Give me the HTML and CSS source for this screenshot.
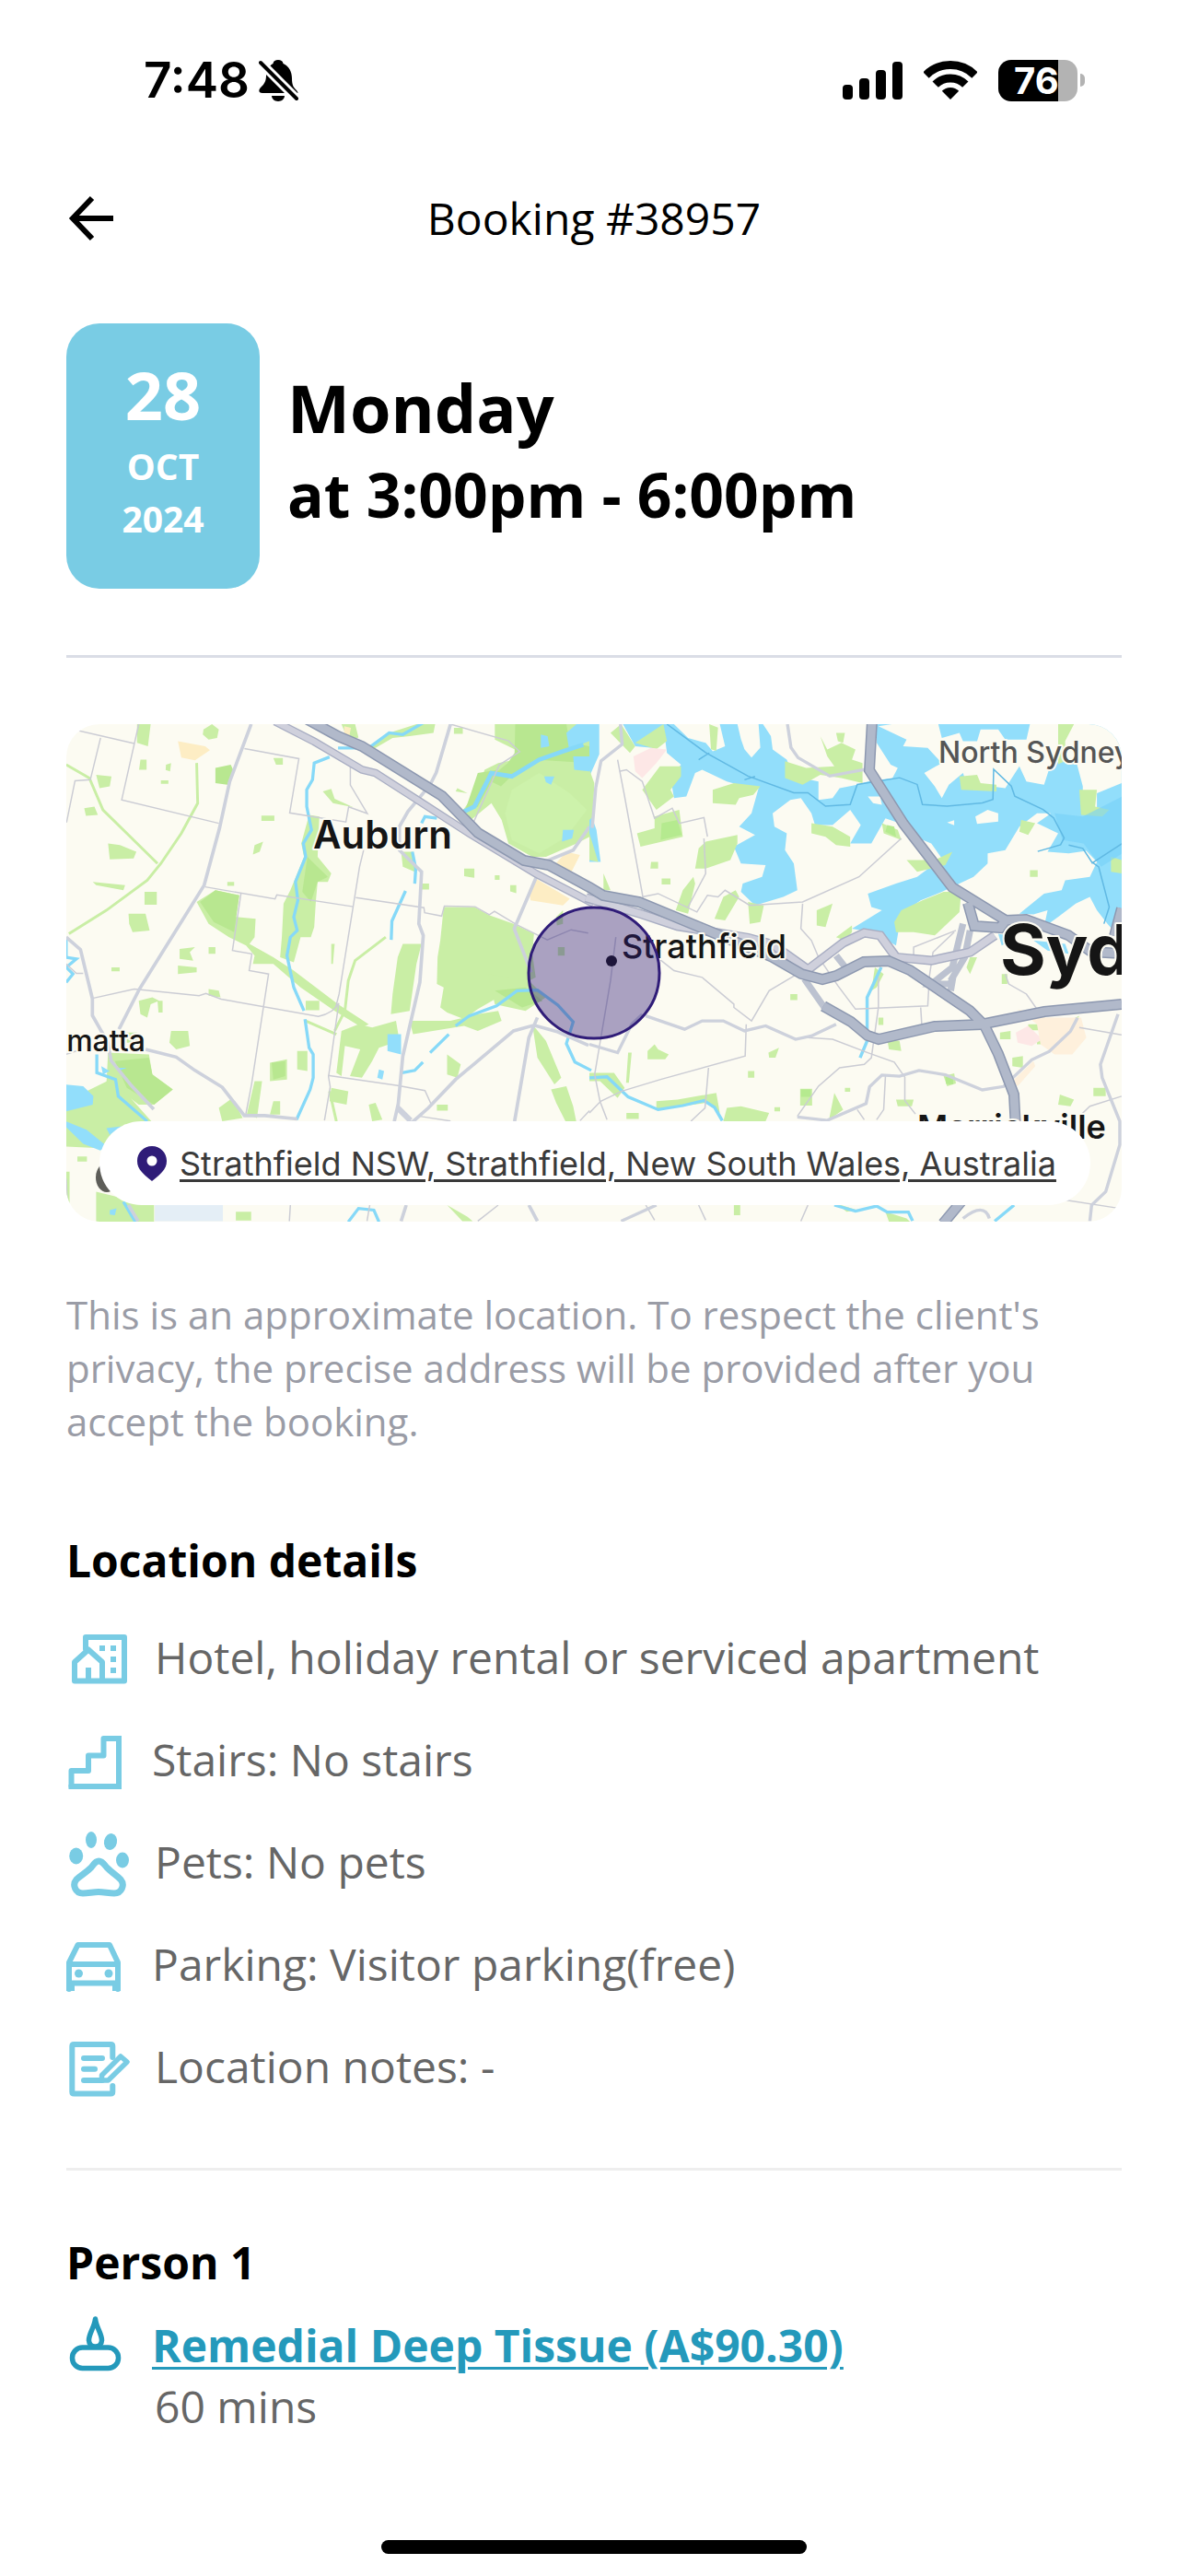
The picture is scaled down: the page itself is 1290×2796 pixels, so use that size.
FILE: index.html
```html
<!DOCTYPE html>
<html lang="en">
<head>
    <meta charset="UTF-8">
    <meta name="viewport" content="width=device-width, initial-scale=1.0">
    <title>Booking #38957</title>
    <link rel="stylesheet" href="styles.css">
</head>
<body>

    <!-- Status bar -->
    <div class="status-bar">
        <div class="status-left">
            <span class="time">7:48</span>
            <svg class="bell" viewBox="0 0 44 46">
                <path d="M21 1c3 0 5 1 5.500 4C33 8 36 14 36 21c0 8 2 10 5 13 3 4 1 3-2 3H4c-5 0-4-4-2-6 4-4 6-7 6-13C8 14 10 8 15.500 5 16 2 18 1 21 1z"/>
                <path d="M14 40h14c0 3-3 6-7 6s-7-3-7-6z"/>
                <path d="M1 3l40 40" stroke="#fff" stroke-width="10"/>
                <path d="M2 4l39 39" stroke="#000" stroke-width="4" stroke-linecap="round"/>
            </svg>
        </div>
        <div class="status-right">
            <svg class="signal" viewBox="0 0 65 41">
                <rect x="0" y="25" width="11" height="16" rx="4"/>
                <rect x="18" y="18" width="11" height="23" rx="4"/>
                <rect x="36" y="9" width="11" height="32" rx="4"/>
                <rect x="54" y="0" width="11" height="41" rx="4"/>
            </svg>
            <svg class="wifi" viewBox="0 0 58 42">
                <path d="M2.500 15.500a37.500 37.500 0 0 1 53 0" fill="none" stroke="#000" stroke-width="9"/>
                <path d="M12.700 25.700a23 23 0 0 1 32.600 0" fill="none" stroke="#000" stroke-width="9"/>
                <path d="M29 42l-9.200-9.200a13 13 0 0 1 18.400 0z"/>
            </svg>
            <div class="battery">
                <span class="battery-level">76</span>
            </div>
        </div>
    </div>

    <!-- Header -->
    <header class="top-bar">
        <button class="back" type="button" aria-label="Back">
            <svg viewBox="0 0 54 54">
                <path d="M51 27H7M28 5L7 27l21 22" fill="none" stroke="#000" stroke-width="6"/>
            </svg>
        </button>
        <h1>Booking #38957</h1>
    </header>

    <main>
        <section class="schedule">
            <div class="date-card">
                <span class="day">28</span>
                <span class="month">OCT</span>
                <span class="month">2024</span>
            </div>
            <div class="when">
                <p class="weekday">Monday</p>
                <p class="hours">at 3:00pm - 6:00pm</p>
            </div>
        </section>

        <hr class="line">

        <!-- Map -->
        <section class="map">
            <svg class="map-art" viewBox="0 0 1146 540" preserveAspectRatio="xMidYMid slice">
                <rect width="1146" height="540" fill="#fcfbf2"/>

                <!-- West half: parks -->
                <g transform="translate(-12 -16) scale(.37 .3635)">
                    <g fill="#c9eea5">
                        <path d="M240 44h40l-8 66-32-10zM435 60l25-16 20 16-5 25-25 5-17-15z"/>
                        <path d="M155 400l35 5 48 20-8 20-70 3zM120 195l45 5-5 30-30 5z"/>
                        <path d="M415 575l55-35 70 15-10 65 58 5-3 55-15 20 70 40 60 40 130 100 90 60-20 10-80-50-100-70-80-70h-60l5-25-25-30-50-25-60-40z"/>
                        <path d="M745 315l30 5-5 120 40 50-10 25h-30l-5 55-5 80-10 30h-30l-20 75-40-15 5-60 5-100 20-40 40-100-8-40z"/>
                        <path d="M1140 590h90l45 25 70 25 60 30-5 60 10 70-110 60-60 35-40 30-50-20-20-15 10-60-20-10 2-80 8-50z"/>
                        <path d="M1020 700h55l-15 60-20 140-55 10 5-60 15-110zM1015 425h35l5 60-35-15z"/>
                        <path d="M1290 44h278v336l-38 20-90 40h-40l-70-40-20-70-30-50-60 50-30-20 50-70 20-60 40-20 50-10 10-25-70-35z"/>
                        <path d="M155 1025l120 5 10 60 60 45-55 45h-45l-65-50-30-10z"/>
                        <path d="M32 1170l120-60 60 40 70 80-80 10-70 70-100-5zM120 1440l80 20 90 10v60H120z"/>
                        <path d="M630 1055l50-10v60l-50 5zM710 1020h30v60l-30-5zM1270 790l120 20 50 50-60 40-90-20z"/>
                        <path d="M1040 930h120l80-20 60-10 10 30-70 30-40-15-150 25zM1400 940l40 50 45 110-20 20-50-80z"/>
                        <path d="M840 960l50-20 40 10 70-20 10 60-60 20-20 40-30 50-35-5 30-80-45-10-10 90-15-10zM1455 1135l45-10 20 60 10 50-30 0-30-60z"/>
                        <path d="M245 870l40-10 20 10-25 10-10 40-20-10zM300 870h15v35h-12zM450 835l30 5 5 20-35-5zM340 960h50l5 45-40 10-20-20zM210 965h30v30h-30z"/>
                        <path d="M585 1110h22l-15 110-30-10zM640 1170h20v40h-30zM480 1190l40-30 30 60-60 10zM810 1130l50 10-5 40-50-10zM920 1180l20-5 20 50-30 5z"/>
                        <path d="M365 715l45-5-15 15 10 25-40-5zM360 765l55 5v15l-55 5zM450 710h20v20h-20zM165 770h24v12h-24zM215 610h50l12 50-50 5-10-25zM262 545h36v38h-36z"/>
                        <path d="M110 515l95 10-5 15-80-15zM85 295l30-5 10 25-35 3zM585 405l25-10-10 30-20 8zM605 317h38v16h-38zM325 165l15-5-3 25-13-4zM310 212h22v10h-22z"/>
                        <path d="M785 245l25-8 10 30 55 25-60-12zM1200 475h30v28l-30-5zM1290 495h14v14h-14zM1335 525h18v24l-18-6zM1180 235l30 15-35-5zM735 870h40v28h-40z"/>
                        <path d="M1150 1030l40 30-10 40-30-10zM1120 1180h32v18h-32zM530 1500h45v26h-45zM1150 1480l60 35 15 13h-30zM810 700l10 0-5 60-5 0zM65 1335h28v15h-28zM32 1380h10v100h-10z"/>
                        <path d="M640 145h28v20h-20zM840 44h40l10 40-30 10zM1170 55h26v18h-26zM250 150h18v30h-22zM1075 520h22v18h-22zM505 515h20v12h-20z"/>
                        <path d="M920 120l60-50 80-26h55l-5 26-70 10-50 5-50 30zM1470 620l20-20v40l-18 5zM1475 710h20v25h-20z"/>
                    </g>
                    <g fill="#b8e790">
                        <path d="M470 175l45-10 7 15-17 45-35-5zM425 575l45-35 70 15-15 110-60-30z"/>
                        <path d="M1350 44h150l10 56 58 10v50l-160-10-70 50-30 30-40-20 60-50 20-30zM1240 190l60-10-60 110-40 20z"/>
                        <path d="M740 440l40 40 20 20-30 15-20 60-25-30zM175 1050l100-10 10 50 60 45-55 45-80-50zM635 1055l40-5v45l-35 10zM1290 840l90-10 50 40-60 20z"/>
                    </g>
                    <path d="M1340 240l80-50 90 60 50 50-60 80-80 50-80-40-20-80z" fill="#cdf2ab"/>
                    <g fill="#fdedc4">
                        <path d="M360 95l80 15 14 12-44 30-40-8zM1410 505l100 60-20 20-95-15-5-30zM1500 425l40 10-25 50-50-20zM848 50l20 5-5 25-15-5z"/>
                    </g>
                    <g fill="none" stroke="#c9eea5" stroke-width="8">
                        <path d="M32 165l68 40 40 95 70 70 90 90M415 160l3 120-48 90-60 90-40 50-120 90-110 70"/>
                        <path d="M970 680l-90 70-20 60-10 90-30 60M735 930l90 40M805 1140l20 90"/>
                    </g>
                    <path d="M292 1480h200v48H292z" fill="#e4eef6"/>
                    <g fill="#92defb">
                        <path d="M975 970h40v60l-40-10zM32 1120l50 5 30 30-2 25-78 20zM32 1230l60 25 60 50-20 12-50-20-50-50zM1500 70l30-26h38v50l-60 25z"/>
                        <path d="M1520 140h48v45l-45-5zM1435 200h30l-10 25-15-8zM1490 360h32l-5 25-30 10zM950 1075l15 5-5 25-15-5zM1425 75l20 5 5 30-25 5zM150 1250l45-5-35 25zM160 1495l20-5-5 20-15-2zM185 1070h25l-25 10zM135 1065l25 15-20 10z"/>
                    </g>
                    <g fill="none" stroke="#86d9f8" stroke-width="9">
                        <path d="M830 115h90l60-45 40 5 60-35M805 142l-45 18-5 50-17 30v50l14 70-24 40 7 40-30 75 7 55-12 50 10 40-20 20-10 55 20 95 30 70M733 925l12 85 12 20v70l-9 35-40 90"/>
                        <path d="M1120 325l-35-5-10 20M1048 425l10 50-3 45M1028 542l-40 90-2 56M1018 1085l37-7 24-25M1100 1025l55-55M1175 945l40-30 80-30 60-45 60-2 60 45 45 50-20 65 25 55 48 25"/>
                        <path d="M122 1030v55l55 20 8 50 85 75M32 680v60l30 5-30 25 20 20-20 25M200 1470l35 60M860 1530l30-40 45 5 15 35"/>
                        <path d="M1190 310l40-20 50-100 60 10 80-50 70-25 60-20" stroke-width="13"/>
                    </g>
                    <!-- West half: roads -->
                    <g fill="none" stroke="#cbccd4" stroke-width="4">
                        <path d="M32 55l200 47M245 44l-50 226 285 70M133 85l-30 125-45 3-25 125M555 117l160 30-27 162 165 27 8-45 55 20-50-85v-55"/>
                        <path d="M440 530l205 36 5-12 225 35M882 562l200 30 2 15 50 10 8-30 90 2 42 24 15-10 65 40 90 45 70-30 50 10"/>
                        <path d="M545 550l-25 170 57 10-8 50 57 10-50 330-17 90M905 420l-12 50-60 380-10 40M112 862l120-27 190 20 20-7 45 17 285 52q45-10 60-40l-30 220 5 30-17 100"/>
                        <path d="M800 1093l205 30 80 15 20 45M1070 1215l90 14M1160 44l170 50 33 32-60 40-75 170M32 1030l30-10M690 1480l-3 48M915 1528l8-48M1240 1528l60-48M1540 1228l28-30M32 1400l4 80M32 760l30 28 20 0"/>
                    </g>
                    <g fill="none" stroke="#cdd1dc" stroke-width="10">
                        <path d="M575 44l-63 171-30 140-45 170-190 310-60 120M32 680l42 37 35 147v50l45 80 10 55 60 75 65 70M265 1015l90 23 55 40 80 50 65 85h60l95 10"/>
                        <path d="M1160 44l-42 145-18 36-65 80-25 45 0 70 65 65-8 155 13 35-10 140-50 220-15 160 40 40 50-45 80-85 170-145 60-17 70 20 90 40M1412 500l-65 155 50 130M1045 1225l-40-40-10 45M1415 920l-25 60-42 250M215 1480l28 48M1030 1480l-15 48M1390 1480l25 48M1400 470l120-50 48-70"/>
                    </g>
                    <path d="M645 36l115 60 140 84 40 10 130 85 140 92 200 123 170 90" fill="none" stroke="#a9aec3" stroke-width="24"/>
                    <path d="M645 36l115 60 140 84 40 10 130 85 140 92 200 123 170 90" fill="none" stroke="#cfd0dc" stroke-width="17"/>
                </g>

                <!-- East half: harbour -->
                <g transform="translate(568 -16) scale(.3827 .3635)">
                    <path fill="#92defb" d="M95 44H1512V690L1470 640 1440 600 1420 560 1380 580 1330 620 1290 650 1300 600 1260 612 1220 610 1290 550 1340 540 1350 510 1420 500 1440 455 1410 422 1360 430 1300 425 1330 370 1270 340 1310 310 1270 310 1220 350 1180 420 1130 430 1130 460 1090 500 1000 545 940 570 885 610 870 705 800 665 745 655 830 600 800 590 790 550 870 520 930 500 1000 445 970 400 900 370 880 340 840 325 800 400 740 400 770 345 740 300 690 345 640 345 630 310 600 265 570 270 520 310 525 350 560 370 555 420 580 460 590 540 550 560 470 585 430 545 435 520 490 500 500 465 430 460 410 410 470 375 425 350 460 310 480 235 440 230 390 215 320 180 300 190 275 260 240 265 230 200 260 165 220 130 215 90 180 115 130 110z"/>
                    <path fill="#92defb" d="M0 44h28v90L0 200zM0 300l20 60 12 95H0zM1160 670l50 10-40 25zM1260 690l90 10 10 30-60-10z"/>
                    <g fill="#fcfbf2">
                        <path d="M240 44h130l15 66-35 15-20-25-50-15zM420 44h60l5 70-25 30-20-25-10-30zM490 44h325v56l40 65 20 10-15 30-70 10-30 10-50 10-20 30-40 5v-55l-70-15-20-50-40-30-5-40-25-40z"/>
                        <path d="M820 50l80 40-10 20 70 5 40 45-50 30 30 40 20 35 20-40 40-35 10 30 110 15 40-65 20 45 50 10 20-65 70-10 20 80v80l40-10V250l70-30V44h-260l-10 46h-60l-20-30h-50l-10 35h-40l-10-25-50 15-10-41h-60l-40-5z"/>
                        <path d="M1095 320l35-20 30 10v25l-60 7zM1015 338l20-7v15zM790 260l35 0 5 25-25-5z"/>
                    </g>
                    <g fill="#c9eea5">
                        <path d="M200 170l60 0 0 30-30 40 10 20-50 40-40-60zM185 320l70-20 10 80-120 30-10-40 50-15zM330 395l90-20 0 25-20 50-70 25-30 0 10-60zM295 500l5 20-20 90-35-10 20-60z"/>
                        <path d="M350 240l60-20 75 10-20 25-40 10-10 20-65-5zM655 80l20 40 40-20 40 20-10 30 30 10v60l-60-15-60-10-50 30-50-20v-50l60 20 80-5-20-30zM700 70l25 0-5 30-15-5z"/>
                        <path d="M340 44l25 10-5 70-15-5zM630 340l60 10 50 30v30l-40-5-30-25-40-10zM830 340l45 20 10 30-50-20zM1050 200l50-5 10 25 45 5v20l-100-5z"/>
                        <path d="M1390 240l50 0-5 50 40 10-20 20-60-5zM1330 44h45l-25 50 0 60-20 10zM1480 440l30 10v40l-30-5zM885 600l60-30 60-25 50 0-5 60-40 40-30 30-60-10-50 0-5-30zM900 450l80 0 50-25-20 40-80 20z"/>
                        <path d="M380 560l35-20 10 20-40 70-30-5zM450 575l45 10-10 50-30 5zM645 600l45-20-20 70-25-5zM175 455l20 0v20h-22zM205 505h25v18h-25zM700 680l45-35 0 20-20 25z"/>
                        <path d="M165 1020l20-20 10 15 30 15-10 15-50 0zM508 1025l30-15-10 30-18 0zM598 1133h34v50h-34zM695 1145l25 50-40 30zM390 1190l40-5 80 20-10 25H380z"/>
                        <path d="M1005 1095l30-8 5 30-25 8zM845 985l35 5 5 30-35-5zM1200 1040l30-5v35l-30-5zM1245 940h32v18h-32zM1165 965l30-5v25l-30 0zM1335 1150l40 15-10 20-35-5zM1430 1130h35v25h-35zM1340 940l50-25-20 50-20 0zM1270 980h25v20h-25z"/>
                        <path d="M570 850h20v18h-20zM450 1080h18v20h-18zM105 1205h35v18h-35zM410 1480h18v30h-18zM840 1500l60 20 10 10h-60zM700 1475l60 20-30 5zM870 1165l50 0-5 20-40 0zM525 1188h16v12h-16zM725 1130h15v12h-15zM820 920h14v22h-14zM1080 740l20 0-20 50-10-20zM1225 330l40 10-20 35-25-10zM1250 480h22v20h-22zM1170 790h16v30h-16zM810 770l25 20-20 40-15 10z"/>
                        <path d="M0 180l14 40-4 100-10 10zM0 370l25 85-25-5zM40 490l20 50-20 0zM0 1085h70l30 45-20 30-50-50H0zM110 1025l10 0-8 90-8 0zM250 1165l110-20 10 60-40-30-140 20 0-25z"/>
                        <path d="M60 70l30-26 40 66-15 20zM130 100l80-56 10 50-30 25z"/>
                    </g>
                    <g fill="#b5ea8f"><path d="M205 340l45-10 12 45-60 15zM845 345l20 5 5 30-30-15zM1010 1098l22 0 0 22-20-2zM600 1135h28v22h-28z"/></g>
                    <path fill="#fde7e6" d="M125 140l50-25 45 5-30 40-40 45-20-20zM1210 965l35-20 40 40-30 20-40-10z"/>
                    <path fill="#fef0dc" d="M1215 895l80 25 100 0 15 60-40 50-50 0-40-30-10-60zM1200 1110l60-60 5 15-50 60z"/>
                    <path fill="#77d0f8" d="M1320 310l80 10 112-60v170l-60 40-50-70-60-10z" opacity=".6"/>
                    <g fill="none" stroke="#61b9e3" stroke-width="4">
                        <path d="M220 44l110 85 120 70 130 50h40l50 40 70-5 20-60 120-20 50 20 15 60 70 5 100-10 30-10 2-90 50 50 10 30 80 40 30 25 30 60-10 20-65 20M1360 405l40 10 25 40 20 15 30 120-15 50M1425 460l87-60M310 150l30-20M440 210l30-10"/>
                    </g>
                    <g fill="none" stroke="#86d9f8" stroke-width="9">
                        <path d="M828 770l-40 90v130l-20 50M0 1100l50-3 60 60 85 38 70-12 60-15 30 20 22 40M695 1480l60 18 60-15 30 18h60l12 26M1150 1528l55-48"/>
                    </g>

                    <!-- East half: roads -->
                    <g fill="none" stroke="#cbccd4" stroke-width="4">
                        <path d="M80 150l20 110 50 290 10 70M85 185l20-5 45 35 35 110 50-30 20 45 70-17 10 57M325 385l5 105-50 100M150 560l45-10 110 55 30-50 30 5 20-20 70 45 150-10 160-75 120-115"/>
                        <path d="M605 580l-5 75 30 35 20 50 55 85 50 70 205-10 5-90 10-70 60-60M180 730l60 50 80 20 90 80v10l50 40 50-90 80-50 0-20M820 800v90l-20 150-20 20-70 10-60 55-60 90M620 980l70 5 100 40 75 28 30 45v70l30 40"/>
                        <path d="M445 940l-3 95-240 70-110 35-60 30-32 35M338 1070l-10 120-40 40M840 1095l-5 100-20 30M760 1195l20 30M940 890l3 50M1180 790l10 30 50 30 30 45M1390 950l120 22M1510 1155l-90 30-30 30M1350 1465l155 25M75 680l-15 130-45 280 15 80 20 55M160 1480l25 45M310 1480l20 45M620 1480l-20 48M920 740v-30l120-50"/>
                    </g>
                    <g fill="none" stroke="#cdd1dc" stroke-width="9">
                        <path d="M88 44l5 60-60 50-15 80-10 120M562 44l10 70 20 30 90 55 100-20M160 915l110 40 50-25 60 0 60 30 60-15 85 40 45-10 70-35M150 910l-30 30-40 85-80-25M590 1217l85 10 110-50 10-50 35-35 50 3 55-17 75 13 105 45 60-10 80-80 50-25 60-60 20-40M1500 910l-50 150 5 40 50 130v70l-40 140-40 40-5 48M1060 1520q60-50 75 0M90 1528l100-48"/>
                    </g>
                    <g fill="none" stroke="#bcc2d0" stroke-width="19"><path d="M1060 640l-30 130-60 50 50 0 10-10-5 30M1080 660l-15 80-40 70M610 805l60 90M700 735l30 40"/></g>
                    <path d="M-10 562l160 50 100 35 200 35 70 20 100 75 100-80 60-30 45 8 45 65 100 10 110-25 70-50" fill="none" stroke="#a9aec3" stroke-width="28"/>
                    <path d="M-10 562l160 50 100 35 200 35 70 20 100 75 100-80 60-30 45 8 45 65 100 10 110-25 70-50" fill="none" stroke="#cfd0dc" stroke-width="20"/>
                </g>

                <!-- Motorways, dark casing under a lighter fill -->
                <g class="motorway-case">
                    <path d="M262-5L295 13 321 24 408 78 447 118 497 148 524 153 568 177 583 186 622 193 687 220 767 253 798 271 821 277 836 273 866 258 893 257 916 267 981 311 997 327 1012 358 1029 402 1031 440"/>
                    <path d="M875-4l-3 54 37 58 53 69 58 36-6 8-28-2-7-25M1020 213l22-1 46 17 25 18 34 2M1146 200l-8 30M822 306l30 17 18 15 12 4 61-14 50-2 69-14 84-8M952 542l20-24"/>
                </g>
                <g class="motorway">
                    <path d="M262-5L295 13 321 24 408 78 447 118 497 148 524 153 568 177 583 186 622 193 687 220 767 253 798 271 821 277 836 273 866 258 893 257 916 267 981 311 997 327 1012 358 1029 402 1031 440"/>
                    <path d="M875-4l-3 54 37 58 53 69 58 36-6 8-28-2-7-25M1020 213l22-1 46 17 25 18 34 2M1146 200l-8 30M822 306l30 17 18 15 12 4 61-14 50-2 69-14 84-8M952 542l20-24"/>
                </g>

                <g class="map-labels">
                    <text class="label-town" x="268" y="135">Auburn</text>
                    <text class="label-suburb" x="86" y="355" text-anchor="end">matta</text>
                    <text class="label-place" x="603" y="254">Strathfield</text>
                    <text class="label-north" x="947" y="42">North Sydney</text>
                    <text class="label-city" x="1014" y="272">Syd</text>
                    <text class="label-place label-strong" x="924" y="450">Marrickville</text>
                </g>
                <ellipse cx="44" cy="492" rx="12" ry="16" fill="#5d5d58"/>
                <circle cx="592" cy="257" r="6" fill="#111"/>
                <circle cx="573" cy="270" r="71" fill="#2f1c78" fill-opacity=".4" stroke="#2f1c78" stroke-width="3"/>
            </svg>
            <a class="address" href="#">
                <svg class="pin" viewBox="0 0 32 38">
                    <path d="M16 0C7 0 0 7 0 16c0 9 6 14 16 22 10-8 16-13 16-22C32 7 25 0 16 0zm0 10.500a5.500 5.500 0 1 1 0 11 5.500 5.500 0 0 1 0-11z" fill-rule="evenodd"/>
                </svg>
                <span>Strathfield NSW, Strathfield, New South Wales, Australia</span>
            </a>
        </section>

        <p class="note">This is an approximate location. To respect the client's privacy, the precise address will be provided after you accept the booking.</p>

        <!-- Location details -->
        <h2 class="details-title">Location details</h2>
        <ul class="details">
            <li>
                <svg class="icon" viewBox="0 0 72 72">
                    <path d="M21 24V11h42v47.500H9V38l15-13.500L39 38v20" stroke-width="6"/>
                    <path class="solid" d="M21 44h6v14h-6zM36 20h6v6h-6zM48 20h6v6h-6zM48 32h6v6h-6zM48 44h6v6h-6z"/>
                </svg>
                <span>Hotel, holiday rental or serviced apartment</span>
            </li>
            <li>
                <svg class="icon icon-narrow" viewBox="0 0 69 72">
                    <path d="M5.500 62V45H24V28.500h16.500V10H57v52z" stroke-width="6"/>
                    <path class="solid" d="M2.500 60h6v5h-6zM54 60h6v5h-6zM54 7h6v6h-6z"/>
                </svg>
                <span>Stairs: No stairs</span>
            </li>
            <li>
                <svg class="icon" viewBox="0 0 72 72">
                    <path d="M35.300 32c4 0 6 4 8.700 7 6 6 11 9 15 13 5 6 1 15-7 15-6 0-11-1.500-17-1.500S24 67 18 67c-8 0-12-9-7-15 4-4 10-7 16-13 2.500-3 4.300-7 8.300-7z" stroke-width="7"/>
                    <g class="solid">
                        <ellipse cx="27" cy="9" rx="6" ry="9"/>
                        <ellipse cx="48" cy="11" rx="7" ry="9" transform="rotate(12 48 11)"/>
                        <ellipse cx="10.700" cy="26.500" rx="7.500" ry="9"/>
                        <ellipse cx="61" cy="31" rx="7" ry="8.500"/>
                    </g>
                </svg>
                <span>Pets: No pets</span>
            </li>
            <li>
                <svg class="icon icon-narrow" viewBox="0 0 69 72">
                    <path d="M3 60V31l9.500-19H47l9 19v29M3 33h53M3 53.500h53" stroke-width="6"/>
                    <path class="solid" d="M0 53h9v9H0zM50 53h9v9h-9z"/>
                    <circle class="solid" cx="13.500" cy="43" r="4.500"/>
                    <circle class="solid" cx="46" cy="43" r="4.500"/>
                </svg>
                <span>Parking: Visitor parking(free)</span>
            </li>
            <li>
                <svg class="icon" viewBox="0 0 72 72">
                    <path d="M50.300 23V11q0-2-2-2h-40q-2 0-2 2v49.500q0 2 2 2h40q2 0 2-2V54" stroke-width="6"/>
                    <path d="M19 24h20M19 35.700h12M19 48h20" stroke-width="6"/>
                    <path d="M38.500 48v-5.500L59 22l7 6-20.500 20z" stroke-width="5.500"/>
                </svg>
                <span>Location notes: -</span>
            </li>
        </ul>

        <hr class="line line-light">

        <!-- Person -->
        <h2 class="person-title">Person 1</h2>
        <div class="service">
            <svg class="icon icon-narrow icon-dark" viewBox="0 0 69 72">
                <rect x="6.500" y="35" width="50" height="22.500" rx="11" stroke-width="5.500"/>
                <path d="M31.500 4c-1 9-7 16-7 23 0 4 3 7 7 7s7-3 7-7c0-7-6-14-7-23z" stroke-width="5.500"/>
            </svg>
            <a href="#">Remedial Deep Tissue (A$90.30)</a>
        </div>
        <p class="duration">60 mins</p>
    </main>

    <div class="home-indicator"></div>

</body>
</html>
```
FILE: styles.css
```css
* {
    box-sizing: border-box;
}

body {
    font-family: "Open Sans", "Noto Sans", sans-serif;
    font-size: 48px;
    line-height: 66px;
    background-color: #fff;
    color: #000;
    margin: 0;
    min-height: 100vh;
    display: flex;
    flex-direction: column;
}

h1, h2, p, ul {
    margin: 0;
    padding: 0;
}

/* Status bar */
.status-bar {
    height: 174px;
    padding: 0 112px 0 156px;
    display: flex;
    justify-content: space-between;
    align-items: center;
    font-family: Inter, sans-serif;
}

.status-left, .status-right {
    display: flex;
    align-items: center;
}

.status-left {
    gap: 10px;
}

.status-right {
    gap: 23px;
}

.time {
    font-size: 53px;
    font-weight: 600;
}

.bell {
    width: 44px;
    height: 46px;
}

.signal {
    width: 65px;
    height: 41px;
}

.wifi {
    width: 58px;
    height: 42px;
}

.battery {
    width: 86px;
    height: 45px;
    border-radius: 14px;
    background: linear-gradient(to right, #000 76%, #b3b3b3 76%);
    position: relative;
    margin-right: 8px;
}

.battery::after {
    content: "";
    position: absolute;
    right: -8px;
    top: 15px;
    width: 5px;
    height: 14px;
    border-radius: 0 5px 5px 0;
    background-color: #b3b3b3;
}

.battery-level {
    display: block;
    padding-left: 17px;
    color: #fff;
    font-size: 40px;
    font-weight: 700;
    line-height: 46px;
}

/* Header */
.top-bar {
    height: 126px;
    padding: 0 72px;
    display: grid;
    grid-template-columns: 1fr auto 1fr;
    align-items: center;
}

.top-bar h1 {
    font-size: 48px;
    font-weight: 400;
}

.back {
    width: 54px;
    height: 54px;
    padding: 0;
    border: none;
    background: none;
    cursor: pointer;
}

.back svg {
    display: block;
}

main {
    padding: 51px 72px 0;
}

/* Date and time */
.schedule {
    display: flex;
    align-items: flex-start;
    gap: 30px;
}

.date-card {
    width: 210px;
    padding: 28px 0 48px;
    border-radius: 36px;
    background-color: #79cce4;
    color: #fff;
    font-weight: 700;
    display: flex;
    flex-direction: column;
    align-items: center;
}

.day {
    font-size: 72px;
    line-height: 98px;
}

.month {
    font-size: 39px;
    line-height: 57px;
}

.when {
    padding-top: 42px;
    font-weight: 700;
}

.weekday {
    font-size: 72px;
    line-height: 98px;
}

.hours {
    font-size: 66px;
    line-height: 90px;
}

.line {
    height: 3px;
    margin: 72px 0;
    border: none;
    background-color: #dadde6;
}

.line-light {
    margin: 71px 0 67px;
    background-color: #eee;
}

/* Map */
.map {
    position: relative;
    height: 540px;
    border-radius: 36px;
    overflow: hidden;
}

.map-art {
    display: block;
    width: 100%;
    height: 100%;
}

.motorway-case {
    fill: none;
    stroke: #8d98b0;
    stroke-width: 12;
}

.motorway {
    fill: none;
    stroke: #b1b9ca;
    stroke-width: 9;
}

.map-labels {
    font-family: Inter, sans-serif;
    font-weight: 500;
    fill: #151515;
    stroke: #fcfbf2;
    stroke-width: 4;
    stroke-linejoin: round;
    paint-order: stroke;
}

.label-town {
    font-size: 42px;
    font-weight: 600;
}

.label-suburb {
    font-size: 32px;
}

.label-place {
    font-size: 36px;
}

.label-strong {
    font-weight: 600;
}

.label-north {
    font-size: 32px;
    fill: #555;
}

.label-city {
    font-size: 76px;
    font-weight: 700;
}

.address {
    position: absolute;
    left: 36px;
    right: 34px;
    bottom: 18px;
    height: 91px;
    padding-left: 41px;
    border-radius: 46px;
    background-color: #fff;
    color: #3a3a3a;
    font-family: Inter, sans-serif;
    font-size: 36px;
    display: flex;
    align-items: center;
    gap: 14px;
    white-space: nowrap;
    text-decoration-thickness: 3px;
    text-underline-offset: 4px;
}

.pin {
    flex: none;
    width: 32px;
    height: 38px;
    fill: #2f1c78;
}

.note {
    margin-top: 72px;
    font-size: 42px;
    line-height: 58px;
    color: #9a9ca6;
}

/* Details */
.details-title, .person-title {
    font-size: 48px;
    font-weight: 700;
}

.details-title {
    margin: 89px 0 39px;
}

.details {
    list-style: none;
    display: flex;
    flex-direction: column;
    gap: 39px;
    color: #666;
}

.details li, .service {
    display: flex;
    align-items: flex-start;
    gap: 24px;
}

.icon {
    flex: none;
    width: 72px;
    height: 72px;
    fill: none;
    stroke: #79cce4;
    stroke-linecap: round;
    stroke-linejoin: round;
}

.icon-narrow {
    width: 69px;
}

.icon .solid {
    fill: #79cce4;
    stroke: none;
}

.icon-dark {
    stroke: #2499bb;
}

/* Person */
.person-title {
    margin-bottom: 24px;
}

.service {
    height: 66px;
}

.service a {
    color: #2499bb;
    font-weight: 700;
    text-decoration-thickness: 3px;
    text-underline-offset: 5px;
}

.duration {
    padding-left: 96px;
    color: #666;
}

.home-indicator {
    width: 462px;
    height: 15px;
    margin: auto auto 24px;
    border-radius: 8px;
    background-color: #000;
}
```
